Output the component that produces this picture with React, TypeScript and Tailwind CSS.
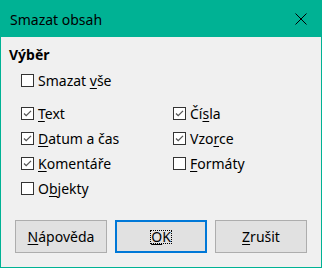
const font = { fontFamily: '"Noto Sans", "Open Sans", sans-serif' }

function Box({ checked }: { checked?: boolean }) {
  return (
    <svg width="13" height="13" viewBox="0 0 13 13" className="shrink-0">
      <rect x="0.5" y="0.5" width="12" height="12" fill="#ffffff" stroke="#333333" />
      {checked && (
        <polyline points="3,6.5 5.2,8.7 10,3.9" fill="none" stroke="#555555" strokeWidth="1.3" />
      )}
    </svg>
  )
}

function Check({ checked, children }: { checked?: boolean; children: React.ReactNode }) {
  return (
    <div className="flex items-center gap-1 h-[25px]">
      <Box checked={checked} />
      <span className="leading-[19px]">{children}</span>
    </div>
  )
}

function Btn({ children, primary }: { children: React.ReactNode; primary?: boolean }) {
  return (
    <button
      className={
        primary
          ? "w-[92px] h-[33px] flex items-center justify-center bg-[#e1e1e1] border-2 border-[#0078d7]"
          : "w-[92px] h-[33px] flex items-center justify-center bg-[#e1e1e1] border border-[#adadad]"
      }
    >
      {children}
    </button>
  )
}

export default function App() {
  return (
    <div className="w-[322px] h-[268px] flex flex-col border border-[#00b294] bg-[#f0f0f0] text-[14px] text-black" style={font}>
      {/* Title bar */}
      <div className="h-[37px] -mx-px -mt-px pt-px flex items-center justify-between bg-[#00b294] pl-[10px] pr-[15px]">
        <span className="leading-[19px] text-[14px] mt-px">Smazat obsah</span>
        <svg width="12" height="12" viewBox="0 0 12 12">
          <path d="M0.5 0.5 L11.5 11.5 M11.5 0.5 L0.5 11.5" stroke="#000000" strokeWidth="1" />
        </svg>
      </div>

      {/* Body */}
      <div className="flex-1 flex flex-col pl-2 pt-[8px]">
        <div className="h-[19px] leading-[19px] font-bold">Výběr</div>
        <div className="ml-3 mt-[4px]">
          <Check>
            Smazat <u className="underline-offset-2">v</u>še
          </Check>
        </div>
        <div className="ml-3 mt-[8px] grid grid-cols-[152px_1fr]">
          <Check checked>
            <u className="underline-offset-2">T</u>ext
          </Check>
          <Check checked>
            Čí<u className="underline-offset-2">s</u>la
          </Check>
          <Check checked>
            <u className="underline-offset-2">D</u>atum a čas
          </Check>
          <Check checked>
            Vzo<u className="underline-offset-2">r</u>ce
          </Check>
          <Check checked>
            <u className="underline-offset-2">K</u>omentáře
          </Check>
          <Check>
            <u className="underline-offset-2">F</u>ormáty
          </Check>
          <Check>
            O<u className="underline-offset-2">b</u>jekty
          </Check>
        </div>
      </div>

      {/* Buttons */}
      <div className="flex gap-2 pl-[14px] pb-[14px]">
        <Btn>
          <span><u className="underline-offset-2">N</u>ápověda</span>
        </Btn>
        <Btn primary>
          <span className="inline-block border border-dotted border-black leading-[12px]">
            <u className="underline-offset-2">O</u>K
          </span>
        </Btn>
        <Btn>
          <span><u className="underline-offset-2">Z</u>rušit</span>
        </Btn>
      </div>
    </div>
  )
}
